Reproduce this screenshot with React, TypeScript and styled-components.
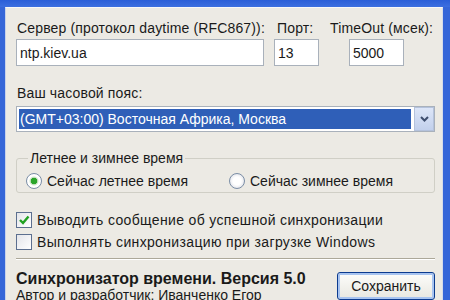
import React, { useState } from "react";
import styled, { createGlobalStyle } from "styled-components";

const GlobalStyle = createGlobalStyle`
  html, body {
    margin: 0;
    padding: 0;
    width: 450px;
    height: 300px;
    overflow: hidden;
    background: #eceae4;
  }
  * { box-sizing: border-box; }
`;

const App: React.FC = () => {
  const [summer, setSummer] = useState(true);
  const [notify, setNotify] = useState(true);
  const [onBoot, setOnBoot] = useState(false);

  return (
    <>
      <GlobalStyle />
      <Window>
        <TitleBar />
        <Frame>
          <Body>
            <FieldRow>
              <Field $width={248}>
                <Label>Сервер (протокол daytime (RFC867)):</Label>
                <TextBox defaultValue="ntp.kiev.ua" />
              </Field>
              <Field $width={45}>
                <Label $indent={2}>Порт:</Label>
                <TextBox defaultValue="13" />
              </Field>
              <Field $width={106}>
                <Label>TimeOut (мсек):</Label>
                <TextBox defaultValue="5000" $indent={20} $width={55} />
              </Field>
            </FieldRow>

            <Label $top={19}>Ваш часовой пояс:</Label>
            <Select>
              <Selected>(GMT+03:00) Восточная Африка, Москва</Selected>
              <DropButton>
                <svg width="9" height="6" viewBox="0 0 9 6">
                  <path d="M1 1 L4.5 4.5 L8 1" fill="none" stroke="#3e4e6e" strokeWidth="2" />
                </svg>
              </DropButton>
            </Select>

            <Group>
              <Legend>Летнее и зимнее время</Legend>
              <RadioRow>
                <Option onClick={() => setSummer(true)} $width={203}>
                  <Radio $checked={summer} />
                  Сейчас летнее время
                </Option>
                <Option onClick={() => setSummer(false)}>
                  <Radio $checked={!summer} />
                  Сейчас зимнее время
                </Option>
              </RadioRow>
            </Group>

            <Checks>
              <Option onClick={() => setNotify(!notify)} $wide>
                <CheckBox>
                  {notify && (
                    <svg width="12" height="12" viewBox="0 0 12 12">
                      <path d="M2 6 L5 9 L10.5 2.5" fill="none" stroke="#21a121" strokeWidth="2.4" />
                    </svg>
                  )}
                </CheckBox>
                Выводить сообщение об успешной синхронизации
              </Option>
              <Option onClick={() => setOnBoot(!onBoot)} $wide>
                <CheckBox>
                  {onBoot && (
                    <svg width="12" height="12" viewBox="0 0 12 12">
                      <path d="M2 6 L5 9 L10.5 2.5" fill="none" stroke="#21a121" strokeWidth="2.4" />
                    </svg>
                  )}
                </CheckBox>
                Выполнять синхронизацию при загрузке Windows
              </Option>
            </Checks>

            <Separator />

            <Footer>
              <About>
                <Title>Синхронизатор времени. Версия 5.0</Title>
                <Author>Автор и разработчик: Иванченко Егор</Author>
              </About>
              <SaveButton>Сохранить</SaveButton>
            </Footer>
          </Body>
        </Frame>
      </Window>
    </>
  );
};
export default App;

const Window = styled.div`
  width: 450px;
  height: 300px;
  display: flex;
  flex-direction: column;
  font-family: "Liberation Sans", Arial, sans-serif;
  font-size: 14px;
  color: #1a1a1a;
`;

const TitleBar = styled.div`
  height: 7px;
  flex-shrink: 0;
  background: linear-gradient(#2a5ed8, #3c6fe0);
`;

const Frame = styled.div`
  flex: 1;
  display: flex;
  border-left: 5px solid #3566d8;
  border-right: 7px solid #3566d8;
  overflow: hidden;
`;

const Body = styled.div`
  flex: 1;
  display: flex;
  flex-direction: column;
  padding: 12px 7px 0 10px;
  background: #eceae4;
  border-left: 1px solid #c7d2ea;
  border-right: 1px solid #d6dcea;
  border-top: 1px solid #f8f8f8;
`;

const FieldRow = styled.div`
  display: flex;
  gap: 10px;
`;

const Field = styled.div<{ $width: number }>`
  width: ${(p) => p.$width}px;
  display: flex;
  flex-direction: column;
  gap: 3px;
`;

const Label = styled.div<{ $top?: number; $indent?: number }>`
  line-height: 16px;
  height: 16px;
  white-space: nowrap;
  margin-top: ${(p) => p.$top || 0}px;
  padding-left: ${(p) => (p.$indent || 0) + 1}px;
  letter-spacing: 0.15px;
`;

const TextBox = styled.input<{ $indent?: number; $width?: number }>`
  height: 27px;
  width: ${(p) => (p.$width ? p.$width + "px" : "100%")};
  margin-left: ${(p) => p.$indent || 0}px;
  border: 1px solid #a9b1bb;
  background: #fff;
  padding: 0 3px;
  font: inherit;
  color: #1a1a1a;
  outline: none;
`;

const Select = styled.div`
  margin-top: 5px;
  height: 26px;
  display: flex;
  align-items: stretch;
  padding: 2px;
  border: 1px solid #a9b1bb;
  background: #fff;
`;

const Selected = styled.div`
  flex: 1;
  background: #2f5fb8;
  color: #fff;
  padding-left: 1px;
  line-height: 20px;
  white-space: nowrap;
`;

const DropButton = styled.div`
  width: 20px;
  margin: -2px -2px -2px 3px;
  display: flex;
  align-items: center;
  justify-content: center;
  background: linear-gradient(#dde6f8, #c2d0ec);
  border: 1px solid #b4c2dc;
`;

const Group = styled.fieldset`
  margin: 18px 0 0 0;
  padding: 0 0 0 9px;
  height: 52px;
  border: 1px solid #d0cfc6;
  border-radius: 3px;
`;

const Legend = styled.legend`
  padding: 0 2px;
  margin-left: 2px;
  line-height: 16px;
`;

const RadioRow = styled.div`
  display: flex;
  margin-top: 4px;
`;

const Option = styled.div<{ $width?: number; $wide?: boolean }>`
  display: flex;
  align-items: center;
  gap: 5px;
  height: 22px;
  white-space: nowrap;
  cursor: default;
  width: ${(p) => (p.$width ? p.$width + "px" : "auto")};
  letter-spacing: ${(p) => (p.$wide ? "0.35px" : "0")};
`;

const Radio = styled.span<{ $checked: boolean }>`
  width: 16px;
  height: 16px;
  border-radius: 50%;
  border: 1px solid #7b8ea6;
  background: radial-gradient(circle, ${(p) => (p.$checked ? "#2ba52b 0 3px, #b9dbb3 3.5px, #fff 5px" : "#fff 0 4px, #e8e9ee 7px")});
  flex-shrink: 0;
`;

const Checks = styled.div`
  margin-top: 16px;
  display: flex;
  flex-direction: column;
`;

const CheckBox = styled.span`
  width: 16px;
  height: 16px;
  border: 1px solid #5c6f8f;
  background: linear-gradient(135deg, #e4e5ea, #fff);
  display: flex;
  align-items: center;
  justify-content: center;
  flex-shrink: 0;
`;

const Separator = styled.div`
  margin-top: 5px;
  height: 2px;
  border-top: 1px solid #aca899;
  border-bottom: 1px solid #fff;
`;

const Footer = styled.div`
  display: flex;
  justify-content: space-between;
  margin-top: 9px;
`;

const About = styled.div`
  display: flex;
  flex-direction: column;
  padding-top: 2px;
`;

const Title = styled.div`
  font-weight: bold;
  line-height: 16px;
  font-size: 16px;
`;

const Author = styled.div`
  line-height: 16px;
`;

const SaveButton = styled.button`
  width: 98px;
  height: 28px;
  margin-top: 3px;
  font: inherit;
  color: #1a1a1a;
  background: linear-gradient(#fdfdfb, #e8e7e0);
  border: 1px solid #0c3b8f;
  border-radius: 3px;
  box-shadow: inset 0 0 0 2px #a8c4f0;
`;
